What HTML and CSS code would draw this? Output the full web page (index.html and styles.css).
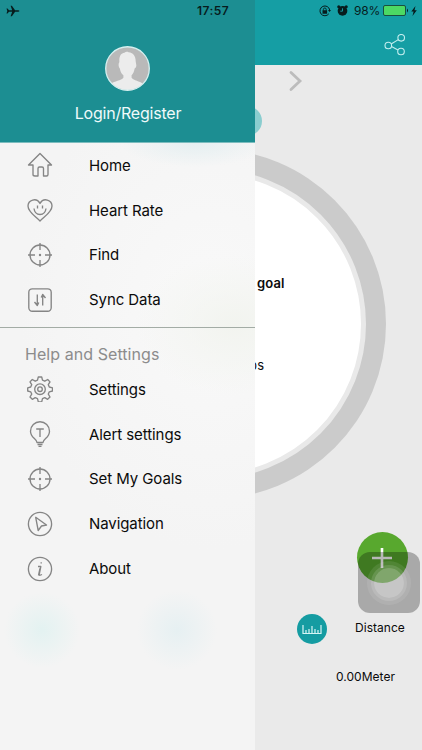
FILE: index.html
```html
<!DOCTYPE html>
<html lang="en">
<head>
<meta charset="utf-8">
<title>Menu</title>
<link rel="stylesheet" href="styles.css">
</head>
<body>
<div class="screen">
  <main class="page">
    <header class="topbar">
      <svg class="share" viewBox="0 0 22 22"><circle cx="4.300" cy="11.500" r="3.300"/><circle cx="17.200" cy="3.800" r="3.300"/><circle cx="17" cy="17.500" r="3.300"/><path d="M7.200 10 14.300 5.600M7.500 12.600l6.500 3.300"/></svg>
    </header>
    <div class="pager">
      <svg class="chevron" viewBox="0 0 14 22"><path d="M2 2.500l9 8.500-9 8.500"/></svg>
      <i class="dot"></i>
    </div>
    <section class="dial">
      <div class="dial-face">
        <b>goal</b>
        <span>ps</span>
      </div>
    </section>
    <section class="actions">
      <div class="plus"><svg viewBox="0 0 22 22"><path d="M11 1v20M1 11h20"/></svg></div>
    </section>
    <section class="distance">
      <div class="ruler"><svg viewBox="0 0 20 11"><path d="M1 1v8.500h18V1M4 6v3M7 5v4M10 2v7M13 5v4M16 6v3"/></svg></div>
      <span>Distance</span>
    </section>
    <p class="meters">0.00Meter</p>
    <div class="assist"><i></i></div>
  </main>

  <aside class="drawer">
    <header class="profile">
      <svg class="avatar" viewBox="0 0 44 44">
        <defs><clipPath id="face"><circle cx="22" cy="22" r="21"/></clipPath></defs>
        <circle cx="22" cy="22" r="21.300" fill="#b9b9b9"/>
        <path clip-path="url(#face)" fill="#ececec" d="M14 14C14 9 16 7 19 6.500C20 5.500 22 5.500 23 6C28 6.500 30 10 30 15L30.500 18C31 20 30 21.500 29 22C28.500 25 27.500 27 26 28.500V31C28 34 34 34 37 37V44H6V37C9 34 16 34 18 31V28.500C16 27 15 25 14.500 22C13 20 13 17 14 16Z"/>
        <circle cx="22" cy="22" r="21.300" fill="none" stroke="#d5efef" stroke-width="1.300"/>
      </svg>
      <span>Login/Register</span>
    </header>
    <nav class="menu menu-main">
      <a><svg viewBox="0 0 26 26"><path d="M1.500 13 13 1.500 24.500 13H21v9.500q0 1.500-1.500 1.500h-3v-7.500q0-1.500-1.500-1.500h-2.500q-1.500 0-1.500 1.500V24h-3Q6 24 6 22.500V13z"/></svg>Home</a>
      <a><svg viewBox="0 0 26 26"><path d="M13 24C8 19 1 15 1 9c0-6 8.500-9 12-2.500C16.500 0 25 3 25 9c0 6-7 10-12 15zM7 11.500c1 8 11 8 12 0M10.500 8.500v3M15.500 8.500v3"/></svg>Heart Rate</a>
      <a><svg viewBox="0 0 26 26"><circle cx="13" cy="13" r="10"/><path d="M13 1v7M13 18v7M1 13h7M18 13h7"/><circle class="solid" cx="13" cy="13" r="1.200"/></svg>Find</a>
      <a><svg viewBox="0 0 26 26"><rect x="1.800" y="1.800" width="22.400" height="22.400" rx="3.500"/><path d="M10.300 7.500v11L7.500 15M15.700 18.500v-11L18.500 11M10.300 18.500l1.500-3M15.700 7.500l-1.500 3"/></svg>Sync Data</a>
    </nav>
    <h2>Help and Settings</h2>
    <nav class="menu">
      <a><svg viewBox="0 0 26 26"><path d="M11.300 1h3.400l.8 3.200 2.300 1 2.900-1.700 2.300 2.400-1.700 2.800 1 2.300 3.200.8v3.200l-3.200.8-1 2.300 1.700 2.900-2.400 2.300-2.800-1.700-2.300 1-.8 3.200h-3.400l-.8-3.200-2.300-1-2.900 1.700L3 21l1.700-2.900-1-2.300L.7 15v-3.200l3-.8 1-2.300L3 5.900l2.300-2.400 2.900 1.700 2.300-1z"/><circle cx="13" cy="13.200" r="5.300"/><circle cx="13" cy="13.200" r="2.300"/></svg>Settings</a>
      <a><svg viewBox="0 0 26 26"><path d="M10 21.500C10 17.500 3.500 17 3.500 10.200a9.500 9.500 0 0 1 19 0C22.500 17 16 17.500 16 21.500zM10.500 23.500h5M11.500 25.300h3M9.200 8h7.600M13 8v8"/></svg>Alert settings</a>
      <a><svg viewBox="0 0 26 26"><circle cx="13" cy="13" r="10"/><path d="M13 1v7M13 18v7M1 13h7M18 13h7"/><circle class="solid" cx="13" cy="13" r="1.200"/></svg>Set My Goals</a>
      <a><svg viewBox="0 0 26 26"><circle cx="13" cy="13" r="11.600"/><path d="M8.700 6.300 19.500 14l-5 1-3.300 4.500z"/></svg>Navigation</a>
      <a><svg viewBox="0 0 26 26"><circle cx="13" cy="13" r="11.600"/><path d="M11 10.500h2.800L12.200 18.500q-.2 1.500 2.800 0M14.200 6.200v1.300M11.500 19.500l1.500-7"/></svg>About</a>
    </nav>
  </aside>

  <div class="status">
    <svg class="plane" viewBox="0 0 14 12"><path d="M.5 3.500h1L3 5.200h3.200L4.600.8h1.300l3.200 4.400h3q1.300.2 1.300.8t-1.300.8h-3l-3.200 4.400H4.600l1.600-4.400H3L1.500 8.500h-1L1.300 6z"/></svg>
    <b>17:57</b>
    <div class="right">
      <svg class="lock" viewBox="0 0 12 12"><path d="M9.800 8.800A4.900 4.900 0 1 1 10.700 5" fill="none" stroke="#071c1d"/><path d="M9 5h3l-1.500 2zM3.500 5.300h4.600v3.400H3.500z"/><path d="M4.400 5.500V4.400a1.400 1.400 0 0 1 2.800 0v1.100" fill="none" stroke="#071c1d" stroke-width=".9"/></svg>
      <svg class="alarm" viewBox="0 0 10 10"><circle cx="5" cy="5.400" r="4.400"/><circle cx="1.600" cy="1.600" r="1.400"/><circle cx="8.400" cy="1.600" r="1.400"/><path d="M5 3v2.600H3" fill="none" stroke="#159ca2" stroke-width=".9"/></svg>
      <span>98%</span>
      <svg class="battery" viewBox="0 0 26 11"><rect x=".5" y=".5" width="22" height="10" rx="1.500" fill="#4cd964" stroke="#14342f" stroke-width=".8"/><path d="M24 3.500q2 2 0 4z"/></svg>
      <svg class="bolt" viewBox="0 0 6 10"><path d="M4.500 0 .3 5.500h2.300L1.500 10 5.800 4.200H3.500z"/></svg>
    </div>
  </div>
</div>
</body>
</html>
```
FILE: styles.css
```css
* { box-sizing: border-box; }
body {
  margin: 0;
  font-family: Inter, "Liberation Sans", sans-serif;
  color: #0b0b0b;
}
.screen {
  position: relative;
  width: 422px;
  height: 750px;
  overflow: hidden;
  background: #eaeaea;
}
.page { display: flex; flex-direction: column; height: 750px; }
.topbar {
  height: 65px;
  flex: none;
  display: flex;
  justify-content: flex-end;
  padding: 34px 16px 0 0;
  background: #159ea4;
}
.share { width: 22px; height: 22px; fill: none; stroke: #c4eeef; stroke-width: 1.1; }
.pager { position: relative; height: 84px; flex: none; padding: 5px 0 0 289px; }
.chevron { width: 14px; height: 22px; fill: none; stroke: #bcbcbc; stroke-width: 2.8; stroke-linecap: round; }
.dot {
  position: absolute;
  left: 232px;
  top: 41px;
  width: 30px;
  height: 30px;
  border-radius: 50%;
  background: #8acdcf;
}
.dial {
  flex: none;
  width: 350px;
  height: 350px;
  margin-left: 36px;
  padding: 20px;
  border-radius: 50%;
  background: #cbcbcb;
}
.dial-face {
  height: 310px;
  display: flex;
  flex-direction: column;
  padding: 100px 0 0;
  border: 5px solid #e9e9e9;
  border-radius: 50%;
  background: #fff;
}
.dial-face b { margin-left: 196px; font-size: 13px; line-height: 18px; font-weight: 600; letter-spacing: .15px; }
.dial-face span { margin-left: 188px; margin-top: 64px; font-size: 13px; line-height: 18px; letter-spacing: .3px; }
.actions { height: 84px; flex: none; padding: 33px 0 0 357px; }
.plus {
  width: 51px;
  height: 51px;
  display: flex;
  align-items: center;
  justify-content: center;
  border-radius: 50%;
  background: #58a82e;
}
.plus svg { width: 22px; height: 22px; margin-right: 1px; fill: none; stroke: #fff; stroke-width: 2.6; }
.distance { display: flex; height: 31px; flex: none; margin: 31px 0 0 297px; }
.ruler {
  width: 30px;
  height: 30px;
  display: flex;
  align-items: center;
  justify-content: center;
  border-radius: 50%;
  background: #159ca2;
}
.ruler svg { width: 20px; height: 11px; fill: none; stroke: #d7f5f5; stroke-width: 1.2; }
.distance span { margin-left: 28px; font-size: 12px; line-height: 27px; letter-spacing: .03px; }
.meters { margin: 24px 0 0 336px; font-size: 12px; line-height: 16px; letter-spacing: .03px; }
.assist {
  position: absolute;
  left: 358px;
  top: 552px;
  width: 62px;
  height: 61px;
  display: flex;
  align-items: center;
  justify-content: center;
  border-radius: 12px;
  background: rgba(0, 0, 0, .28);
}
.assist i {
  width: 30px;
  height: 30px;
  border-radius: 50%;
  background: rgba(255, 255, 255, .34);
  box-shadow: 0 0 0 3px rgba(255, 255, 255, .13), 0 0 0 7px rgba(255, 255, 255, .09);
}
.drawer {
  position: absolute;
  left: 0;
  top: 0;
  width: 255px;
  height: 750px;
  background:
    radial-gradient(circle at 42px 630px, #e3f2f1, rgba(227, 242, 241, 0) 38px),
    radial-gradient(circle at 177px 630px, #e6f0f2, rgba(230, 240, 242, 0) 40px),
    radial-gradient(ellipse 75px 24px at 195px 143px, #e5eff1, rgba(229, 239, 241, 0)),
    radial-gradient(ellipse 100px 70px at 235px 325px, #f2f4ef, rgba(242, 244, 239, 0)),
    radial-gradient(ellipse 190px 240px at 210px 310px, #f9f9f9, #f4f4f4);
}
.profile {
  height: 143px;
  display: flex;
  flex-direction: column;
  align-items: center;
  padding-top: 46px;
  background: #1c8e92;
  border-bottom: 1px solid #7cbcbe;
  color: #effafa;
  font-size: 16px;
  line-height: 20px;
}
.avatar { width: 45px; height: 45px; margin-bottom: 12px; }
.profile span { letter-spacing: -.22px; margin-left: 1px; }
.menu a {
  display: flex;
  align-items: center;
  gap: 36px;
  height: 44.8px;
  padding-left: 27px;
  font-size: 15px;
  letter-spacing: -.08px;
}
.menu svg { width: 26px; height: 26px; fill: none; stroke: #858585; stroke-width: 1.35; stroke-linejoin: round; }
.menu .solid { fill: #858585; stroke: none; }
.menu-main { height: 185px; border-bottom: 1px solid #a3aca5; }
.drawer h2 {
  height: 39px;
  margin: 0;
  padding: 16px 0 0 25px;
  color: #8c8c8c;
  font-size: 16px;
  line-height: 20px;
  font-weight: 400;
  letter-spacing: .06px;
}
.status {
  position: absolute;
  left: 0;
  top: 0;
  width: 422px;
  height: 21px;
  display: flex;
  align-items: center;
  padding: 0 5px 0 6px;
  color: #071c1d;
  fill: #071c1d;
}
.plane { width: 14px; height: 12px; }
.status b { margin-left: 177px; font-size: 12px; font-weight: 600; letter-spacing: .45px; }
.right { display: flex; align-items: center; margin-left: auto; font-size: 12px; }
.right span { letter-spacing: -.2px; }
.lock { width: 12px; height: 12px; margin-right: 6px; }
.alarm { width: 11px; height: 11px; margin-right: 6px; }
.battery { width: 26px; height: 11px; margin: 0 2px 0 3px; }
.bolt { width: 6px; height: 10px; }
```
